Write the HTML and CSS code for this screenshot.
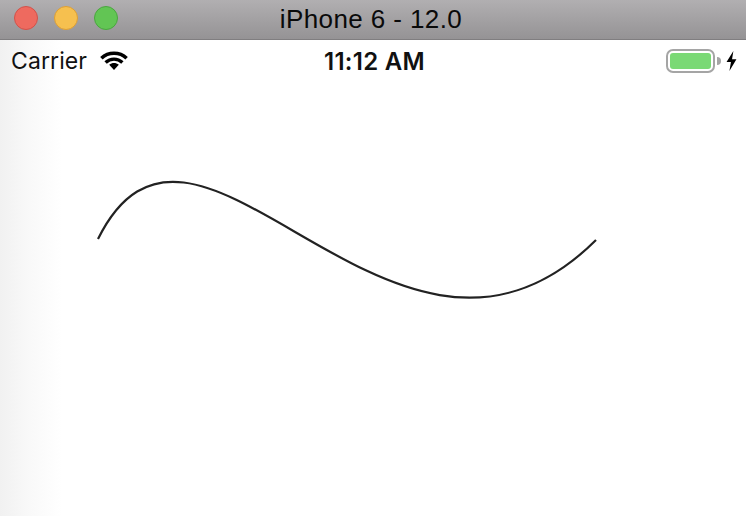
FILE: index.html
```html
<!DOCTYPE html>
<html>
<head>
  <title>iPhone 6 - 12.0</title>
  <link rel="stylesheet" href="styles.css">
</head>
<body>
  <div class="titlebar">
    <div class="lights">
      <span class="light red"></span>
      <span class="light yellow"></span>
      <span class="light green"></span>
    </div>
    <div class="title">iPhone 6 - 12.0</div>
  </div>
  <div class="screen">
    <div class="statusbar">
      <div class="status-left">
        <span class="carrier">Carrier</span>
        <svg class="wifi" width="30" height="22" viewBox="0 0 30 22">
          <path d="M15 20 L10.2 14.8 C13 12.4 17 12.4 19.8 14.8 Z" fill="#000"/>
          <path d="M2.4 8.2 C9.4 1.6 20.6 1.6 27.6 8.2" fill="none" stroke="#000" stroke-width="3.6"/>
          <path d="M6.6 12.6 C11.4 8 18.6 8 23.4 12.6" fill="none" stroke="#000" stroke-width="3.4"/>
        </svg>
      </div>
      <div class="clock">11:12 AM</div>
      <div class="status-right">
        <div class="battery"><div class="battery-fill"></div></div>
        <div class="battery-tip"></div>
        <svg class="bolt" width="13" height="22" viewBox="0 0 11 20">
          <path d="M7.2 1 L1 11 L5 11 L3.6 19 L10 8.4 L6 8.4 Z" fill="#000"/>
        </svg>
      </div>
    </div>
    <svg class="canvas" width="746" height="436" viewBox="0 80 746 436">
      <path d="M98 239 C197 40 395 440 596 240" fill="none" stroke="#222" stroke-width="2.2"/>
    </svg>
  </div>
</body>
</html>
```

FILE: styles.css
```css
body {
  margin: 0;
  width: 746px;
  height: 516px;
  overflow: hidden;
  background-color: #fff;
  font-family: "Inter", "Liberation Sans", sans-serif;
  color: #000;
}

.titlebar {
  display: flex;
  align-items: center;
  justify-content: center;
  position: relative;
  height: 39px;
  padding-right: 4px;
  background: linear-gradient(#b1afb1, #959395);
  border-bottom: 1px solid #807e80;
}

.lights {
  position: absolute;
  left: 14px;
  top: 6px;
  display: flex;
  gap: 16px;
}

.light {
  width: 24px;
  height: 24px;
  border-radius: 50%;
  box-sizing: border-box;
  border: 1px solid;
}

.red {
  background-color: #ee6a5f;
  border-color: #d2524a;
}

.yellow {
  background-color: #f6c04f;
  border-color: #dd9f35;
}

.green {
  background-color: #62c554;
  border-color: #4aa63f;
}

.title {
  font-family: "Liberation Sans", sans-serif;
  font-size: 26px;
  letter-spacing: 0.4px;
  color: #0a0a0a;
}

.screen {
  height: 476px;
  background: linear-gradient(to right, #f1f1f1, #f9f9f9 30px, #fff 62px);
}

.statusbar {
  display: grid;
  grid-template-columns: 1fr auto 1fr;
  align-items: center;
  height: 42px;
  padding: 0 8px 0 11px;
}

.status-left {
  display: flex;
  align-items: center;
  gap: 12px;
}

.carrier {
  font-size: 23px;
  letter-spacing: 0.1px;
  color: #111;
}

.clock {
  font-size: 24px;
  font-weight: 600;
  letter-spacing: 0.3px;
  color: #111;
}

.status-right {
  display: flex;
  align-items: center;
  justify-content: flex-end;
}

.battery {
  box-sizing: border-box;
  width: 49px;
  height: 24px;
  padding: 2px;
  border: 2px solid #a5a5a5;
  border-radius: 7px;
}

.battery-fill {
  height: 100%;
  border-radius: 3px;
  background-color: #7ad975;
}

.battery-tip {
  width: 4px;
  height: 8px;
  margin-left: 2px;
  margin-right: 4px;
  background-color: #a5a5a5;
  border-radius: 0 4px 4px 0;
}

.canvas {
  display: block;
  margin-top: -2px;
}
```
